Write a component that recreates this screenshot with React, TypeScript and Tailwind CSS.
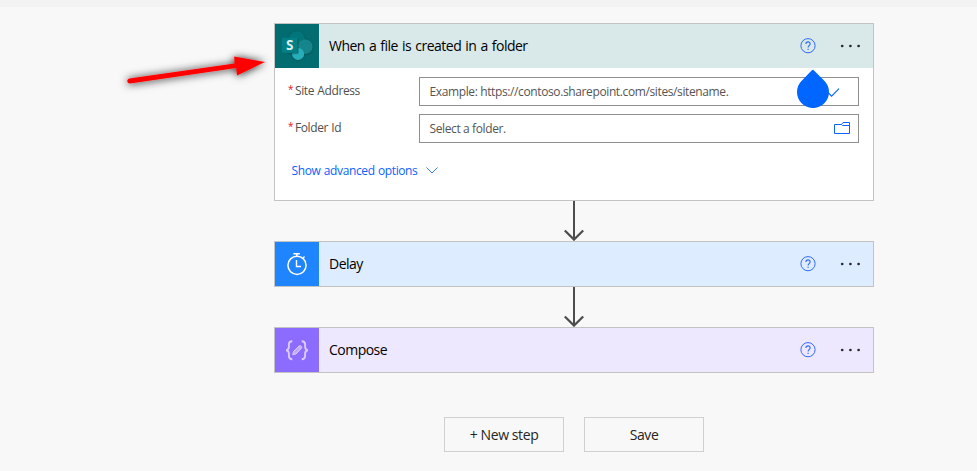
import type { ReactNode } from "react";

function HelpIcon() {
  return (
    <svg className="h-4 w-4 shrink-0" viewBox="0 0 16 16" fill="none" stroke="#2f6bff">
      <circle cx="8" cy="7.7" r="7.1" strokeWidth="1" />
      <path d="M5.900 6.100C5.900 4.700 6.800 3.900 8 3.900s2.100.8 2.100 2c0 1.700-2 1.700-2 3.500" strokeWidth="1.1" />
      <path d="M8.100 10.700v1.300" strokeWidth="1.1" />
    </svg>
  );
}

function MoreIcon() {
  return (
    <svg className="h-4 w-5 shrink-0" viewBox="0 0 20 16" fill="#292929">
      <circle cx="2.200" cy="8" r="1.350" />
      <circle cx="10.400" cy="8" r="1.350" />
      <circle cx="18.600" cy="8" r="1.350" />
    </svg>
  );
}

function SharePointIcon() {
  return (
    <svg className="h-11 w-11" viewBox="0 0 44 44">
      <defs>
        <filter id="soft" x="-30%" y="-30%" width="160%" height="160%">
          <feDropShadow dx="0" dy="0.5" stdDeviation="1.2" floodColor="#003b3e" floodOpacity="0.6" />
        </filter>
      </defs>
      <g filter="url(#soft)">
        <circle cx="21.800" cy="15.500" r="8.200" fill="#04757a" />
        <circle cx="30.200" cy="22.700" r="7.300" fill="#17848b" />
        <path d="M17.200 28.500H22.600V23.900A6 6 0 1 1 17.200 31z" fill="#28aebb" />
      </g>
      <path d="M9 14.500h14.800v13.800a2 2 0 0 1-2 2H12z" fill="#024f52" opacity="0.45" />
      <rect x="7" y="13.800" width="15.400" height="15" rx="1.300" fill="#038085" />
      <text
        x="14.800"
        y="26.400"
        textAnchor="middle"
        fill="#d9eeee"
        className="font-['Open_Sans',sans-serif] text-[13.5px] font-bold"
      >
        S
      </text>
    </svg>
  );
}

function TimerIcon() {
  return (
    <svg className="h-11 w-11" viewBox="0 0 44 44" fill="none" stroke="#fff">
      <circle cx="22" cy="23.300" r="9.100" strokeWidth="1.5" />
      <path d="M18.400 11.700h6.400M21.800 12v2.500" strokeWidth="1.5" />
      <path d="M27.600 16.500l1.900-2" strokeWidth="1.4" />
      <path d="M21.500 18v6.500H26" strokeWidth="1.4" />
    </svg>
  );
}

function ComposeIcon() {
  return (
    <svg className="h-11 w-11" viewBox="0 0 44 44" fill="none" stroke="#d9ccff" strokeWidth="1.9">
      <path d="M17.300 13.200c-2.800 0-3.400 1-3.400 3.200v2.400c0 2-.8 3-2.700 3.400 1.900.4 2.700 1.400 2.700 3.400V28c0 2.200.6 3.200 3.400 3.200" />
      <path d="M26.700 13.200c2.800 0 3.400 1 3.400 3.200v2.400c0 2 .8 3 2.700 3.400-1.900.4-2.700 1.400-2.700 3.400V28c0 2.200-.6 3.200-3.400 3.200" />
      <path d="M17.700 26.800l.8-3.300 5.500-5.400a1.400 1.400 0 0 1 2 0l.3.300a1.400 1.400 0 0 1 0 2L20.900 26z" fill="#c4b1ff" strokeWidth="1" />
      <path d="M20.200 24.200l3.400-3.400" stroke="#a48aff" strokeWidth="0.8" />
    </svg>
  );
}

function StepHeader({ icon, title, tile, tint }: { icon: ReactNode; title: string; tile: string; tint: string }) {
  return (
    <div className={`flex h-11 items-center ${tint}`}>
      <div className={`h-11 w-11 shrink-0 ${tile}`}>{icon}</div>
      <span className="ml-2.5 flex-1 pb-px text-[14px] tracking-[-0.52px] [word-spacing:1px] text-black">{title}</span>
      <HelpIcon />
      <div className="mr-[13px] ml-6 flex">
        <MoreIcon />
      </div>
    </div>
  );
}

function Connector() {
  return (
    <svg className="h-10 w-6" viewBox="0 0 24 40" fill="none" stroke="#4d4d4d" strokeWidth="2">
      <path d="M12 0v39" />
      <path d="M2.800 29.500L12 38.600l9.200-9.100" strokeWidth="2.2" />
    </svg>
  );
}

function Field({ label, placeholder, children }: { label: string; placeholder: string; children: ReactNode }) {
  return (
    <div className="flex h-[29px]">
      <div className="flex w-[131px] text-[12px] leading-[27px] tracking-[-0.4px] [word-spacing:0.6px] text-[#505050]">
        <span className="w-[7px] text-[10px] leading-[25px] text-[#e81123]">*</span>
        {label}
      </div>
      <div className="flex w-[440px] items-center justify-between border border-[#8f8f8f] bg-white pr-2 pl-[9.5px] text-[12px] tracking-[-0.38px] text-[#555]">
        <span>{placeholder}</span>
        {children}
      </div>
    </div>
  );
}

export default function App() {
  return (
    <div className="relative h-[471px] w-[977px] overflow-hidden bg-[#f8f8f8] font-['Open_Sans','Noto_Sans',sans-serif]">
      <div className="h-[7px] bg-[#f3f3f3]" />
      <main className="ml-[274px] flex w-[600px] flex-col items-center pt-4">
        <section className="h-[178px] w-full border border-[#c3c3c3] bg-white">
          <StepHeader icon={<SharePointIcon />} title="When a file is created in a folder" tile="bg-[#036c70]" tint="bg-[#d9e8e8]" />
          <div className="flex flex-col gap-2 pt-[9px] pl-[13px]">
            <Field label="Site Address" placeholder="Example: https://contoso.sharepoint.com/sites/sitename.">
              <svg className="mr-2.5 h-4 w-4" viewBox="0 0 16 16" fill="none" stroke="#0b62ff" strokeWidth="1.1">
                <path d="M4 8.500l3.600 3.700L15 4.700" />
              </svg>
            </Field>
            <Field label="Folder Id" placeholder="Select a folder.">
              <svg className="h-4 w-4" viewBox="0 0 16 16" fill="none" stroke="#0b62ff">
                <path d="M.5 3.500H7.500l1.500-2h6.500v11H.5zM7.500 3.500l1 1h7" />
              </svg>
            </Field>
          </div>
          <button className="mt-[18px] ml-[16.5px] flex items-center gap-[9px] text-[12px] leading-5 tracking-[-0.38px] [word-spacing:0.6px] text-[#0b62ff]">
            <span>Show advanced options</span>
            <svg className="h-3 w-3" viewBox="0 0 12 12" fill="none" stroke="#3f78ff">
              <path d="M.5 2.500L6 8l5.500-5.500" />
            </svg>
          </button>
        </section>
        <Connector />
        <section className="w-full border border-[#c3c3c3]">
          <StepHeader icon={<TimerIcon />} title="Delay" tile="bg-[#1f85ff]" tint="bg-[#deecff]" />
        </section>
        <Connector />
        <section className="w-full border border-[#c3c3c3]">
          <StepHeader icon={<ComposeIcon />} title="Compose" tile="bg-[#8c6cff]" tint="bg-[#eee8ff]" />
        </section>
        <div className="mt-11 flex gap-5 text-[14px] tracking-[-0.4px] [word-spacing:1.8px] text-[#252525]">
          <button className="h-[35px] w-[120px] border border-[#d0d0d0]">+ New step</button>
          <button className="h-[35px] w-[120px] border border-[#d0d0d0]">Save</button>
        </div>
      </main>
      <svg className="absolute top-[68px] left-[795px] h-10 w-9" viewBox="0 0 36 40" fill="#0066ff">
        <path d="M18 1.500L29.300 12.700A16 16 0 1 1 6.700 12.700L16.600 2.400Q18 1.100 19.400 2.400z" />
      </svg>
      <svg className="absolute top-[40px] left-[110px] h-[60px] w-[165px]" viewBox="0 0 165 60">
        <defs>
          <filter id="glow" x="-15%" y="-60%" width="130%" height="220%">
            <feDropShadow dx="0" dy="0.5" stdDeviation="4" floodColor="#000" floodOpacity="0.9" />
          </filter>
        </defs>
        <path
          filter="url(#glow)"
          fill="#ff0000"
          d="M19.300 38.500L124.500 23.600L124.200 16.500L155 22L127 35.500L126.200 28L20 43.500Q17 43 17.300 40.500Q17.600 38.800 19.300 38.500z"
        />
      </svg>
    </div>
  );
}
